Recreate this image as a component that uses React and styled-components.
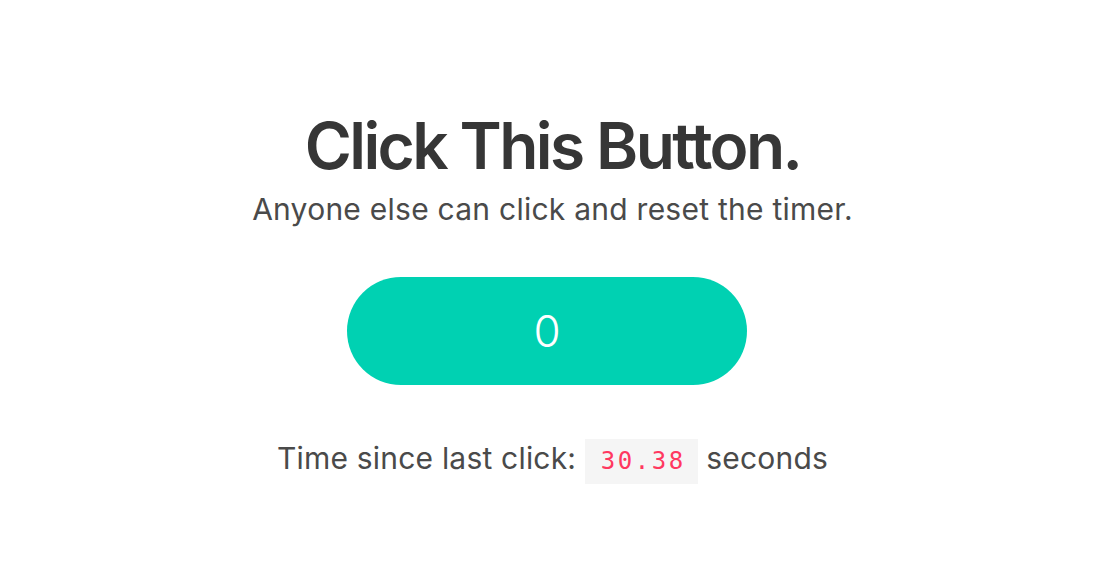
import { useState } from "react"
import styled, { createGlobalStyle } from "styled-components"

const GlobalStyle = createGlobalStyle`
    html, body {
        margin: 0;
        padding: 0;
        background: #ffffff;
    }
    body {
        font-family: Inter, "Noto Sans", sans-serif;
        color: #4a4a4a;
    }
`

export default function App() {
    const [clicks, setClicks] = useState(0)
    const [elapsed] = useState(30.38)

    return (
        <>
            <GlobalStyle />
            <Page>
                <Title>Click This Button.</Title>
                <Subtitle>Anyone else can click and reset the timer.</Subtitle>
                <ClickButton type="button" onClick={() => setClicks(clicks + 1)}>
                    {clicks}
                </ClickButton>
                <Timer>
                    Time since last click: <Code>{elapsed.toFixed(2)}</Code> seconds
                </Timer>
            </Page>
        </>
    )
}

const Page = styled.main`
    display: flex;
    flex-direction: column;
    align-items: center;
    padding-top: 110px;
    text-align: center;
`

const Title = styled.h1`
    margin: 0;
    font-size: 64px;
    line-height: 72px;
    font-weight: 600;
    color: #363636;
    letter-spacing: -2.6px;
`

const Subtitle = styled.p`
    margin: 10px 0 0 0;
    font-size: 30px;
    line-height: 35px;
    font-weight: 400;
    color: #4a4a4a;
    letter-spacing: 0.25px;
`

const ClickButton = styled.button`
    margin: 50px 11px 0 0;
    width: 400px;
    height: 108px;
    border: none;
    border-radius: 54px;
    background-color: #00d1b2;
    color: #ffffff;
    font-family: Inter, "Noto Sans", sans-serif;
    font-size: 44px;
    font-weight: 300;
    cursor: pointer;
`

const Timer = styled.p`
    margin: 51px 0 0 0;
    font-size: 30px;
    line-height: 45px;
    color: #4a4a4a;
    letter-spacing: 0.2px;
`

const Code = styled.code`
    display: inline-block;
    padding: 0 12px 0 16px;
    line-height: 45px;
    background-color: #f5f5f5;
    color: #ff3860;
    font-family: "DejaVu Sans Mono", "Liberation Mono", monospace;
    font-size: 24px;
    letter-spacing: 2.5px;
`
